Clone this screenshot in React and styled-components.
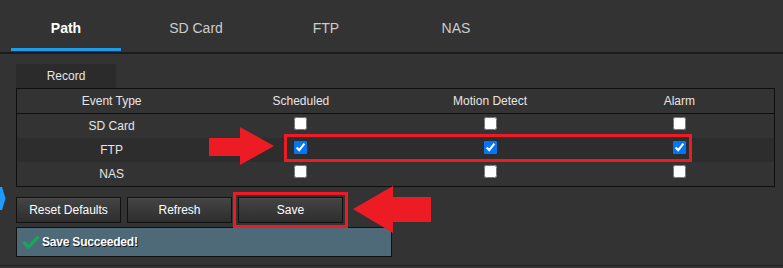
import React from "react";
import styled, { createGlobalStyle } from "styled-components";

const GlobalStyle = createGlobalStyle`
    body {
        margin: 0;
        background: #333333;
        font-family: "Liberation Sans", Arial, sans-serif;
    }
`;

const Page = styled.div`
    position: relative;
    width: 783px;
    height: 268px;
    background: #333333;
    overflow: hidden;
`;

const TabBar = styled.div`
    display: flex;
    height: 52px;
    padding-left: 1px;
    border-bottom: 2px solid #1c1c1c;
`;

const Tab = styled.div`
    display: flex;
    flex-direction: column;
    width: 130px;
    height: 52px;
    color: ${(p) => (p.$active ? "#ffffff" : "#cccccc")};
    font-size: 14px;
    font-weight: ${(p) => (p.$active ? "bold" : "normal")};
`;

const TabLabel = styled.div`
    flex: 1;
    display: flex;
    align-items: center;
    justify-content: center;
    padding-top: 8px;
`;

const Indicator = styled.div`
    height: 3px;
    margin: 0 10px 1px;
    background: ${(p) => (p.$active ? "#1e9be9" : "transparent")};
`;

const Content = styled.div`
    padding: 10px 8px 8px 16px;
    border-bottom: 1px solid #202020;
`;

const SectionLabel = styled.div`
    width: 100px;
    height: 24px;
    line-height: 24px;
    text-align: center;
    background: #2b2b2b;
    color: #e6e6e6;
    font-size: 12px;
`;

const Table = styled.div`
    position: relative;
    width: 757px;
    border: 1px solid #0f0f0f;
`;

const Row = styled.div`
    display: grid;
    grid-template-columns: repeat(4, 1fr);
    height: 24px;
    background: ${(p) => (p.$shade ? "#2d2d2d" : "transparent")};
    border-bottom: ${(p) => (p.$head ? "1px solid #0f0f0f" : "none")};
`;

const Cell = styled.div`
    display: flex;
    justify-content: center;
    align-items: ${(p) => (p.$box ? "flex-start" : "center")};
    color: #e6e6e6;
    font-size: 12px;
`;

const Check = styled.input.attrs({ type: "checkbox", readOnly: true })`
    width: 13px;
    height: 13px;
    margin: 3px 0 0;
`;

const RowHighlight = styled.div`
    position: absolute;
    left: 267px;
    top: 45px;
    width: 402px;
    height: 22px;
    border: 3px solid #ed1c24;
    pointer-events: none;
`;

const Buttons = styled.div`
    display: flex;
    gap: 6px;
    margin-top: 10px;
`;

const Button = styled.button`
    width: 105px;
    height: 26px;
    padding: 0;
    border: 1px solid #111111;
    background: linear-gradient(#444444, #2e2e2e);
    box-shadow: inset 0 1px 0 #4c4c4c;
    color: #ffffff;
    font-family: "Liberation Sans", Arial, sans-serif;
    font-size: 12px;
    outline: ${(p) => (p.$highlight ? "3px solid #ed1c24" : "none")};
    outline-offset: 2px;
`;

const Status = styled.div`
    display: flex;
    align-items: center;
    gap: 2px;
    width: 369px;
    height: 28px;
    margin-top: 4px;
    padding-left: 5px;
    background: #4e6977;
    border: 1px solid #111111;
    color: #ffffff;
    font-size: 12px;
    font-weight: bold;
    letter-spacing: -0.2px;
    text-shadow: 1px 1px 0 #1a1a1a;
`;

const Overlay = styled.svg`
    position: absolute;
    left: ${(p) => p.$x}px;
    top: ${(p) => p.$y}px;
    pointer-events: none;
`;

const rows = [
    { name: "SD Card", on: false },
    { name: "FTP", on: true },
    { name: "NAS", on: false },
];

export default function App() {
    const tabs = ["Path", "SD Card", "FTP", "NAS"];

    return (
        <Page>
            <GlobalStyle />
            <TabBar>
                {tabs.map((t, i) => (
                    <Tab key={t} $active={i === 0}>
                        <TabLabel>{t}</TabLabel>
                        <Indicator $active={i === 0} />
                    </Tab>
                ))}
            </TabBar>

            <Content>
                <SectionLabel>Record</SectionLabel>
                <Table>
                    <Row $head>
                        <Cell>Event Type</Cell>
                        <Cell>Scheduled</Cell>
                        <Cell>Motion Detect</Cell>
                        <Cell>Alarm</Cell>
                    </Row>
                    {rows.map((r) => (
                        <Row key={r.name} $shade={r.on}>
                            <Cell>{r.name}</Cell>
                            <Cell $box><Check checked={r.on} /></Cell>
                            <Cell $box><Check checked={r.on} /></Cell>
                            <Cell $box><Check checked={r.on} /></Cell>
                        </Row>
                    ))}
                    <RowHighlight />
                </Table>

                <Buttons>
                    <Button>Reset Defaults</Button>
                    <Button>Refresh</Button>
                    <Button $highlight>Save</Button>
                </Buttons>

                <Status>
                    <svg width="18" height="14" viewBox="0 0 18 14">
                        <path d="M1.5 7 L6.5 12 L16.5 1.5" fill="none" stroke="#1fa35c" strokeWidth="3.4" />
                    </svg>
                    Save Succeeded!
                </Status>
            </Content>

            {/* side drawer handle peeking in at the left edge */}
            <Overlay $x={0} $y={187} width="6" height="24" viewBox="0 0 6 24">
                <polygon points="0,0 2,0 5.5,11.5 2,23 0,23" fill="#1e9bff" />
            </Overlay>

            {/* annotation arrows */}
            <Overlay $x={209} $y={127} width="66" height="39" viewBox="0 0 66 39">
                <polygon points="0,11 31,11 31,0 65,19 31,38 31,29 0,29" fill="#ed1c24" />
            </Overlay>
            <Overlay $x={353} $y={186} width="79" height="48" viewBox="0 0 79 48">
                <polygon points="0,23 40,0 40,11 78,11 78,36 40,36 40,47" fill="#ed1c24" />
            </Overlay>
        </Page>
    );
}
